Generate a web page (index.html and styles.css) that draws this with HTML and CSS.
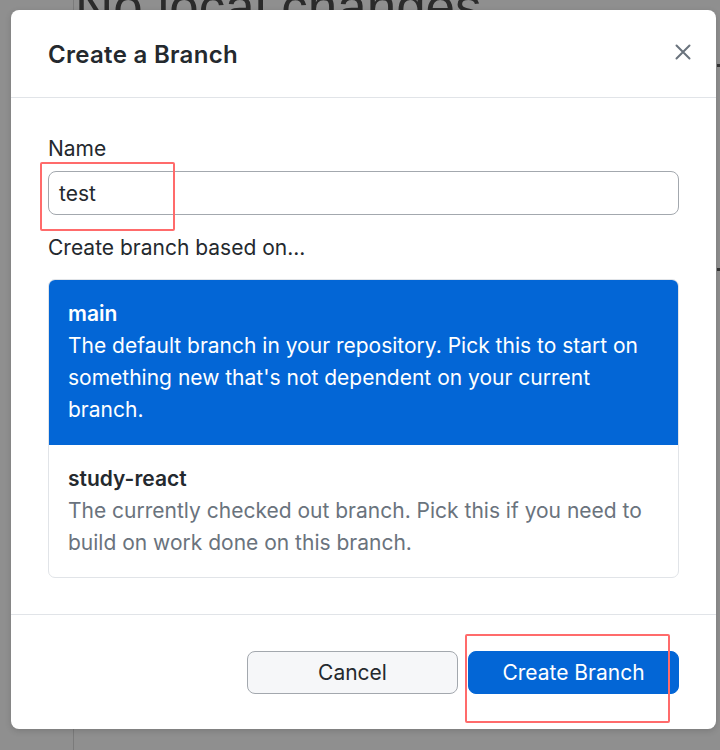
FILE: index.html
```html
<!DOCTYPE html>
<html>
<head>
<meta charset="utf-8">
<link rel="stylesheet" href="styles.css">
</head>
<body>
<div class="app">
  <div class="app-bg">
    <aside class="sidebar"></aside>
    <main class="main">
      <h1 class="bg-heading">No local changes</h1>
    </main>
    <div class="right-col">
      <span class="mark mark-1"></span>
      <span class="mark mark-2"></span>
    </div>
  </div>

  <div class="modal">
    <header class="modal-header">
      <h2 class="modal-title">Create a Branch</h2>
      <button class="close-btn" aria-label="Close">
        <svg width="18" height="18" viewBox="0 0 18 18"><path d="M2.5 2.5 L15.5 15.5 M15.5 2.5 L2.5 15.5" stroke="#6a737d" stroke-width="2" stroke-linecap="round" fill="none"/></svg>
      </button>
    </header>
    <div class="modal-body">
      <label class="field-label">Name</label>
      <div class="input">test</div>
      <div class="field-label based">Create branch based on...</div>
      <div class="branch-list">
        <div class="branch-item selected">
          <div class="branch-name">main</div>
          <div class="branch-desc">The default branch in your repository. Pick this to start on something new that's not dependent on your current branch.</div>
        </div>
        <div class="branch-item">
          <div class="branch-name">study-react</div>
          <div class="branch-desc">The currently checked out branch. Pick this if you need to build on work done on this branch.</div>
        </div>
      </div>
    </div>
    <footer class="modal-footer">
      <button class="btn btn-secondary">Cancel</button>
      <button class="btn btn-primary">Create Branch</button>
    </footer>
  </div>

  <div class="annot annot-1"></div>
  <div class="annot annot-2"></div>
</div>
</body>
</html>
```

FILE: styles.css
```css
* { box-sizing: border-box; }
html, body {
  margin: 0;
  padding: 0;
}
body {
  background: #8f8f8f;
  font-family: Inter, "Liberation Sans", Arial, sans-serif;
  width: 720px;
  height: 750px;
  overflow: hidden;
}
.app {
  position: relative;
  width: 720px;
  height: 750px;
}
.app-bg {
  display: flex;
  height: 100%;
}
.sidebar {
  width: 74px;
  border-right: 1px solid #7b7b7b;
  flex: none;
}
.main {
  flex: 1;
}
.bg-heading {
  margin: -24px 0 0 1px;
  font-family: "Liberation Sans", Arial, sans-serif;
  font-size: 53px;
  font-weight: 400;
  color: #2b2b2b;
  line-height: 62px;
  white-space: nowrap;
}
.right-col {
  width: 4px;
  flex: none;
  position: relative;
}
.mark {
  position: absolute;
  left: 1px;
  width: 3px;
  height: 3px;
  background: #333;
}
.mark-1 { top: 64px; }
.mark-2 { top: 268px; }

.modal {
  position: absolute;
  left: 11px;
  top: 10px;
  width: 705px;
  height: 719px;
  background: #fff;
  border-radius: 8px;
  box-shadow: 0 2px 6px rgba(0,0,0,0.15);
  display: flex;
  flex-direction: column;
  color: #24292e;
}
.modal-header {
  height: 88px;
  flex: none;
  display: flex;
  align-items: center;
  justify-content: space-between;
  padding: 0 24px 0 37px;
  border-bottom: 1px solid #e1e4e8;
}
.modal-title {
  margin: 0;
  font-size: 24px;
  font-weight: 600;
  letter-spacing: 0.3px;
  color: #24292e;
  padding-top: 2px;
}
.close-btn {
  background: none;
  border: none;
  padding: 0;
  width: 18px;
  height: 18px;
  display: flex;
  margin-top: -4px;
  margin-right: 0;
}
.modal-body {
  padding: 39px 37px 36px;
  display: flex;
  flex-direction: column;
  border-bottom: 1px solid #e1e4e8;
}
.field-label {
  font-size: 21px;
  line-height: 24px;
  color: #24292e;
}
.input {
  margin-top: 10px;
  height: 44px;
  border: 1px solid #a3a8ae;
  border-radius: 8px;
  padding: 0 10px;
  display: flex;
  align-items: center;
  font-size: 21px;
  color: #24292e;
}
.based {
  margin-top: 21px;
}
.branch-list {
  margin-top: 19px;
  border: 1px solid #e1e4e8;
  border-radius: 7px;
  overflow: hidden;
}
.branch-item {
  padding: 18px 19px 18px 19px;
  font-size: 21px;
  line-height: 32px;
}
.branch-item.selected {
  background: #0366d6;
  color: #fff;
  padding-bottom: 19px;
}
.branch-name {
  font-weight: 600;
}
.branch-item .branch-desc {
  color: #6a737d;
}
.branch-item.selected .branch-desc {
  color: #fff;
}
.modal-footer {
  flex: 1;
  display: flex;
  justify-content: flex-end;
  align-items: flex-start;
  gap: 10px;
  padding: 36px 37px 0;
}
.btn {
  width: 211px;
  height: 43px;
  border-radius: 8px;
  font-family: inherit;
  font-size: 21px;
  cursor: pointer;
}
.btn-secondary {
  background: #f6f7f9;
  border: 1px solid #a3a8ae;
  color: #24292e;
}
.btn-primary {
  background: #0366d6;
  border: 1px solid #0366d6;
  color: #fff;
}
.annot {
  position: absolute;
  border: 2px solid #ff6b6b;
  border-radius: 2px;
}
.annot-1 {
  left: 40px;
  top: 162px;
  width: 135px;
  height: 69px;
}
.annot-2 {
  left: 465px;
  top: 634px;
  width: 205px;
  height: 89px;
}
```
